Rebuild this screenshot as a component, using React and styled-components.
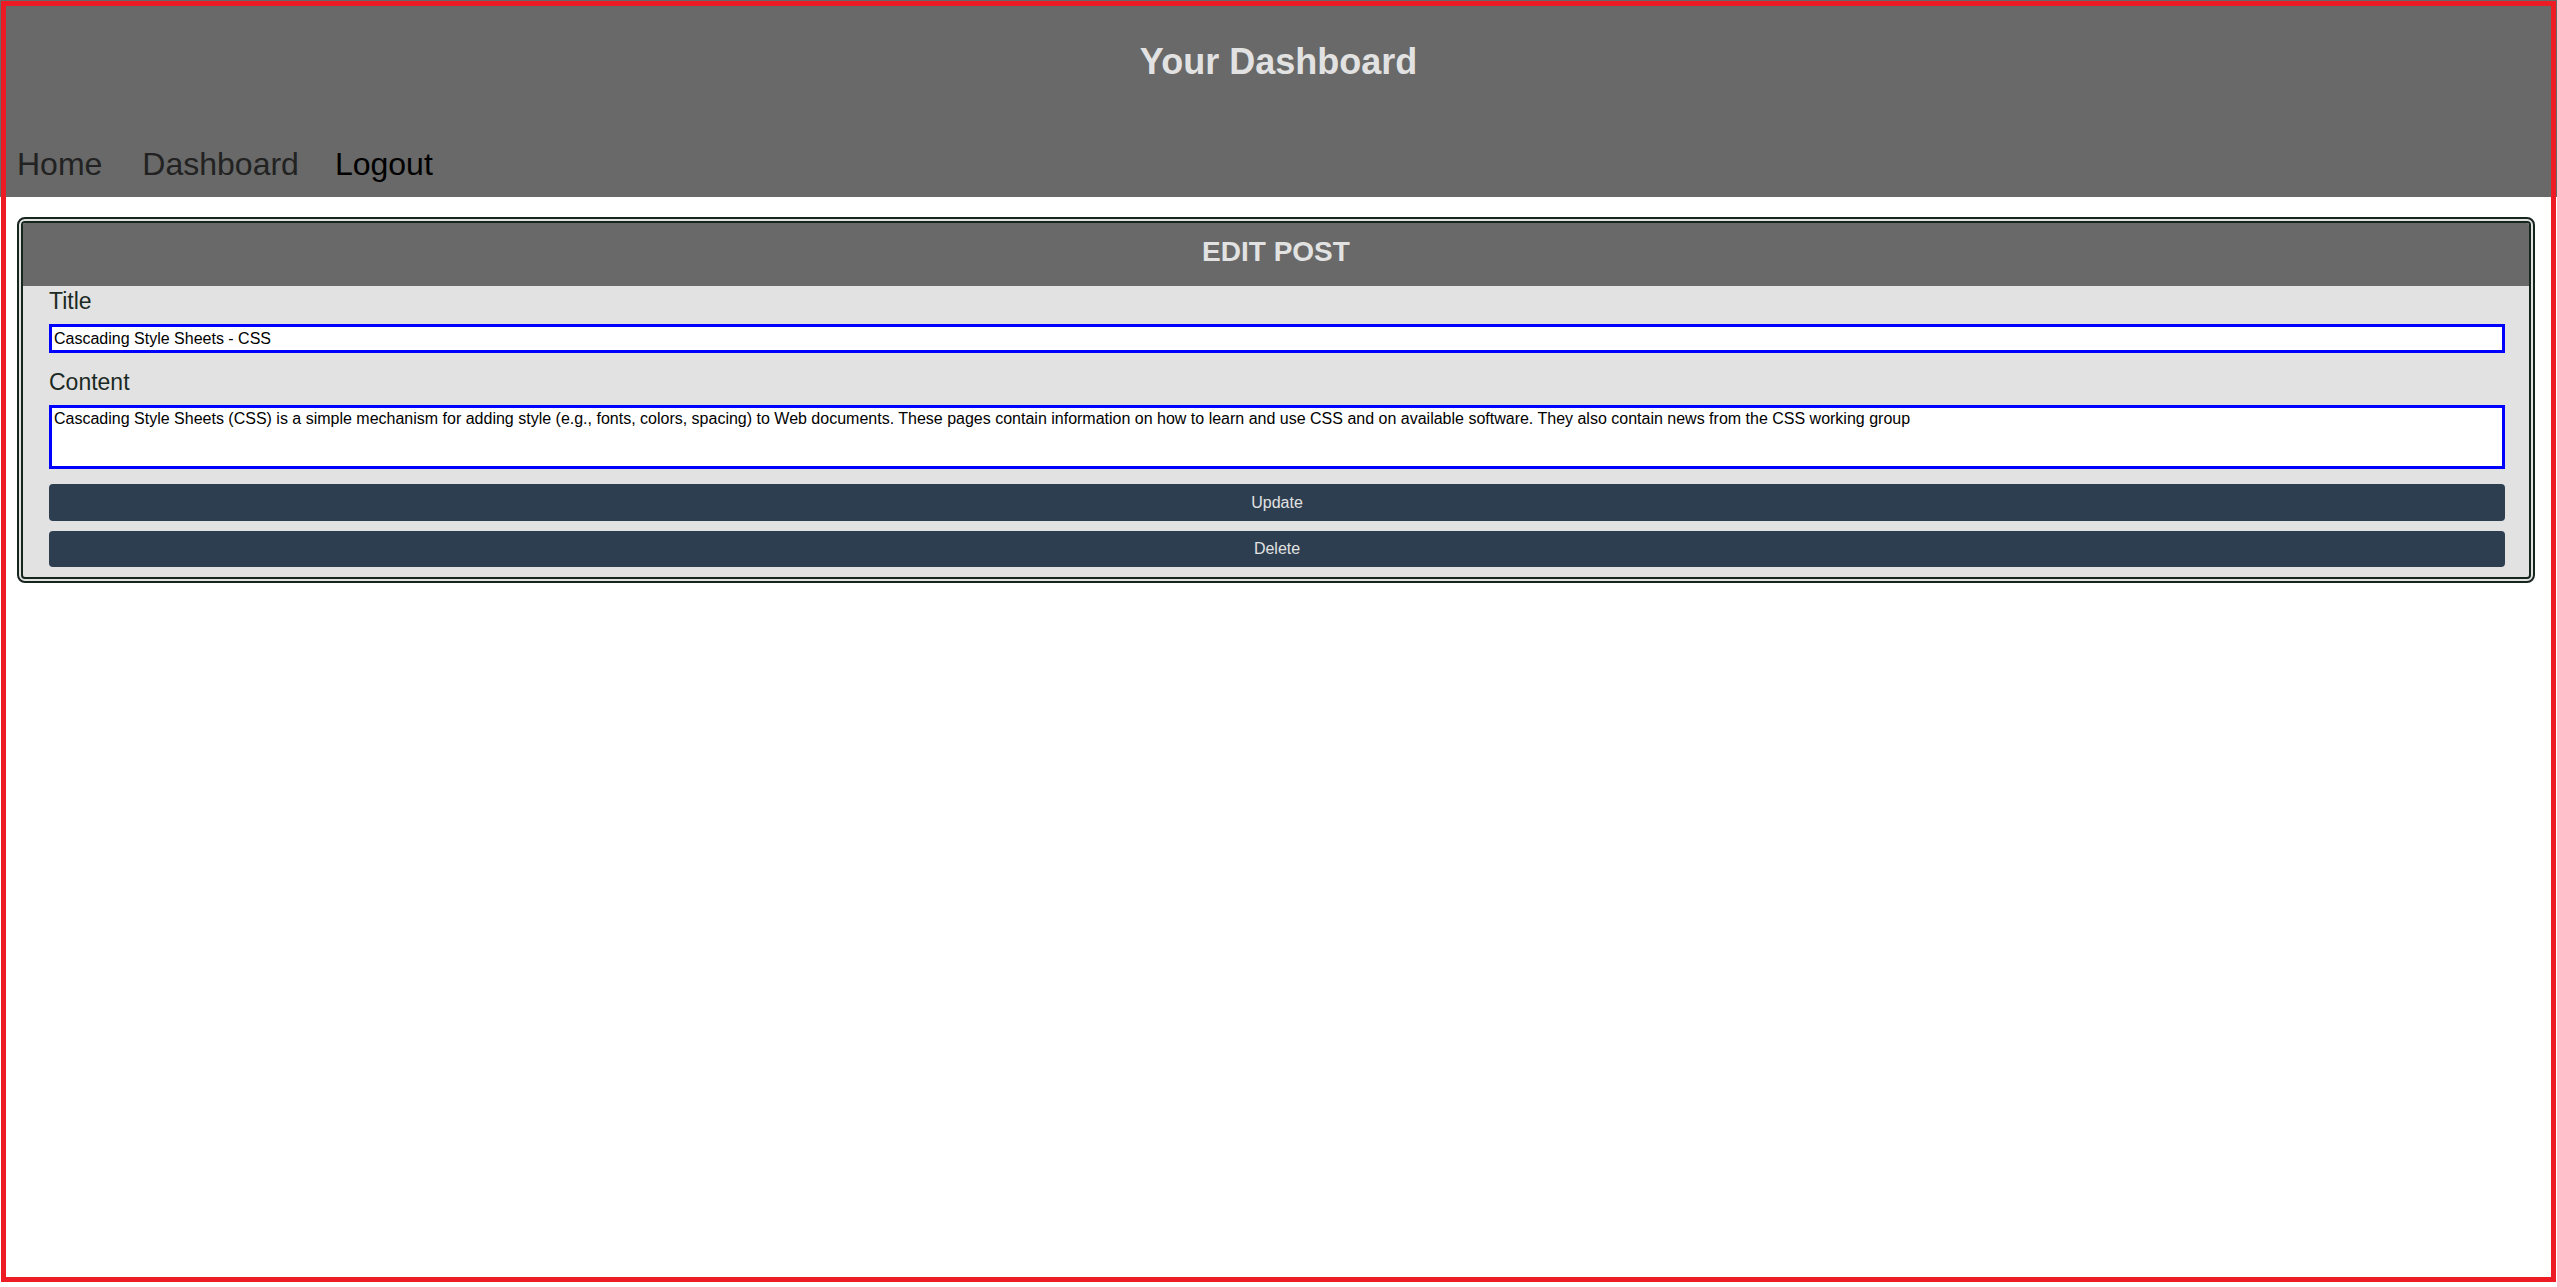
import React from 'react';
import styled, { createGlobalStyle } from 'styled-components';

const GlobalStyle = createGlobalStyle`
  * {
    box-sizing: border-box;
  }

  body {
    margin: 0;
    background: #ffffff;
    font-family: 'Liberation Sans', Arial, sans-serif;
  }
`;

const StyledPage = styled.div`
  position: relative;
  min-height: 100vh;
`;

// red frame drawn over the whole page
const StyledFrame = styled.div`
  position: absolute;
  top: 1px;
  left: 1px;
  right: 1px;
  bottom: 5px;
  border: 5px solid #ed1c24;
  pointer-events: none;
`;

const StyledHeader = styled.header`
  height: 197px;
  padding-top: 41px;
  background-color: #686968;
`;

const StyledTitle = styled.h1`
  margin: 0;
  font-size: 36px;
  line-height: 42px;
  font-weight: bold;
  text-align: center;
  color: #e2e2e2;
`;

const StyledNav = styled.nav`
  display: flex;
  align-items: center;
  margin-top: 63px;
  padding-left: 17px;
`;

const StyledNavLink = styled.a`
  margin-right: ${(props) => props.$space}px;
  font-size: 32px;
  line-height: 37px;
  color: #222222;
  text-decoration: none;
`;

const StyledLogout = styled.button`
  padding: 0;
  border: none;
  background: none;
  font-family: inherit;
  font-size: 32px;
  line-height: 37px;
  color: #000000;
  cursor: pointer;
`;

const StyledMain = styled.main`
  padding: 20px 22px 0 17px;
`;

const StyledCard = styled.section`
  border: 6px double #17251f;
  border-radius: 8px;
  background-color: #e2e2e2;
  overflow: hidden;
`;

const StyledCardTitle = styled.h2`
  margin: 0;
  height: 63px;
  padding-top: 13px;
  background-color: #686968;
  font-size: 28px;
  line-height: 32px;
  font-weight: bold;
  text-align: center;
  color: #e2e2e2;
`;

const StyledForm = styled.form`
  display: flex;
  flex-direction: column;
  padding: 2px 24px 10px 26px;
`;

const StyledLabel = styled.label`
  margin-bottom: 10px;
  font-size: 23px;
  line-height: 26px;
  color: #1b2a24;
`;

const StyledInput = styled.input`
  height: 29px;
  margin-bottom: 16px;
  padding: 0 2px;
  border: 3px solid #0000ff;
  background: #ffffff;
  font-family: inherit;
  font-size: 16px;
  color: #000000;
  outline: none;
`;

const StyledTextArea = styled.textarea`
  height: 64px;
  margin-bottom: 15px;
  padding: 2px;
  border: 3px solid #0000ff;
  background: #ffffff;
  font-family: inherit;
  font-size: 16px;
  line-height: normal;
  color: #000000;
  resize: none;
  outline: none;
`;

const StyledButton = styled.button`
  height: ${(props) => props.$height}px;
  margin-bottom: ${(props) => props.$after}px;
  border: none;
  border-radius: 4px;
  background-color: #2c3e50;
  font-family: inherit;
  font-size: 16px;
  color: #e2e2e2;
  cursor: pointer;
`;

const content =
  'Cascading Style Sheets (CSS) is a simple mechanism for adding style (e.g., fonts, colors, spacing) to Web documents. These pages contain information on how to learn and use CSS and on available software. They also contain news from the CSS working group';

const App = () => (
  <StyledPage>
    <GlobalStyle />
    <StyledHeader>
      <StyledTitle>Your Dashboard</StyledTitle>
      <StyledNav>
        <StyledNavLink href="#" $space={40}>
          Home
        </StyledNavLink>
        <StyledNavLink href="#" $space={36}>
          Dashboard
        </StyledNavLink>
        <StyledLogout type="button">Logout</StyledLogout>
      </StyledNav>
    </StyledHeader>
    <StyledMain>
      <StyledCard>
        <StyledCardTitle>EDIT POST</StyledCardTitle>
        <StyledForm onSubmit={(e) => e.preventDefault()}>
          <StyledLabel htmlFor="post-title">Title</StyledLabel>
          <StyledInput id="post-title" type="text" defaultValue="Cascading Style Sheets - CSS" />
          <StyledLabel htmlFor="post-content">Content</StyledLabel>
          <StyledTextArea id="post-content" defaultValue={content} />
          <StyledButton type="submit" $height={37} $after={10}>
            Update
          </StyledButton>
          <StyledButton type="button" $height={36} $after={0}>
            Delete
          </StyledButton>
        </StyledForm>
      </StyledCard>
    </StyledMain>
    <StyledFrame />
  </StyledPage>
);

export default App;
